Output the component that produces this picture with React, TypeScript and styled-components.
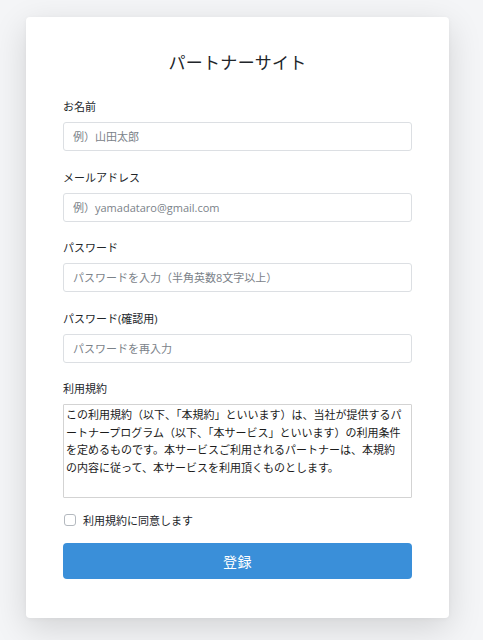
import React from "react";
import styled, { createGlobalStyle } from "styled-components";

const FONT = `"Open Sans", "Noto Sans CJK JP", sans-serif`;

const GlobalStyle = createGlobalStyle`
  html, body {
    margin: 0;
    padding: 0;
    background: #f4f5f7;
  }
  body {
    font-family: ${FONT};
    font-size: 11px;
    line-height: 17.5px;
    color: #212529;
  }
  * { box-sizing: border-box; }
`;

const Page = styled.div`
  padding: 17px 34px 24px 26px;
`;

const Card = styled.form`
  width: 423px;
  background: #ffffff;
  border-radius: 4px;
  box-shadow: 0 10px 34px rgba(0, 0, 0, 0.14), 0 1px 4px rgba(0, 0, 0, 0.04);
  padding: 34px 37px 39px 37px;
  display: flex;
  flex-direction: column;
`;

const Title = styled.h1`
  margin: 0 0 23px 0;
  text-align: center;
  font-size: 17px;
  line-height: 24px;
  font-weight: 400;
  color: #212529;
  letter-spacing: 0.3px;
`;

const Field = styled.div`
  display: flex;
  flex-direction: column;
  margin-bottom: 17.5px;
`;

const Label = styled.label`
  display: block;
  font-size: 11px;
  line-height: 17.5px;
  margin-bottom: 6.5px;
  color: #212529;
`;

const Input = styled.input`
  width: 100%;
  height: 29px;
  padding: 4px 9px;
  font-family: ${FONT};
  font-size: 11px;
  line-height: 17.5px;
  color: #495057;
  background: #fff;
  border: 1px solid #dcdfe3;
  border-radius: 3px;
  outline: none;
  &::placeholder {
    color: #7b8289;
  }
`;

const Terms = styled.textarea`
  width: 100%;
  height: 94px;
  padding: 1px 2px;
  font-family: ${FONT};
  font-size: 11px;
  line-height: 17.5px;
  color: #1b1b1b;
  background: #fff;
  border: 1px solid #d3d3d3;
  border-radius: 1px;
  resize: none;
  outline: none;
  overflow: hidden;
`;

const CheckRow = styled.label`
  display: flex;
  align-items: center;
  gap: 7px;
  margin: -4px 0 13.5px 1px;
  height: 17.5px;
  font-size: 11px;
  line-height: 17.5px;
  color: #212529;
`;

const Check = styled.input`
  appearance: none;
  -webkit-appearance: none;
  margin: 0;
  width: 12px;
  height: 12px;
  border: 1px solid #b4b9bf;
  border-radius: 3px;
  background: #fff;
`;

const Submit = styled.button`
  width: 100%;
  height: 36px;
  border: none;
  border-radius: 4px;
  background: #3a8fd9;
  color: #ffffff;
  font-family: ${FONT};
  font-size: 14px;
  letter-spacing: 0.5px;
  cursor: pointer;
`;

const termsText =
  "この利用規約（以下、「本規約」といいます）は、当社が提供するパ\n" +
  "ートナープログラム（以下、「本サービス」といいます）の利用条件\n" +
  "を定めるものです。本サービスご利用されるパートナーは、本規約\n" +
  "の内容に従って、本サービスを利用頂くものとします。";

const fields = [
  { id: "name", label: "お名前", type: "text", placeholder: "例）山田太郎" },
  { id: "email", label: "メールアドレス", type: "email", placeholder: "例）yamadataro@gmail.com" },
  { id: "password", label: "パスワード", type: "password", placeholder: "パスワードを入力（半角英数8文字以上）" },
  { id: "password_confirmation", label: "パスワード(確認用)", type: "password", placeholder: "パスワードを再入力" },
];

export default function App() {
  return (
    <>
      <GlobalStyle />
      <Page>
        <Card onSubmit={(e) => e.preventDefault()}>
          <Title>パートナーサイト</Title>
          {fields.map((f) => (
            <Field key={f.id}>
              <Label htmlFor={f.id}>{f.label}</Label>
              <Input id={f.id} type={f.type} placeholder={f.placeholder} />
            </Field>
          ))}
          <Field>
            <Label htmlFor="terms">利用規約</Label>
            <Terms id="terms" readOnly defaultValue={termsText} />
          </Field>
          <CheckRow>
            <Check type="checkbox" />
            利用規約に同意します
          </CheckRow>
          <Submit type="submit">登録</Submit>
        </Card>
      </Page>
    </>
  );
}
